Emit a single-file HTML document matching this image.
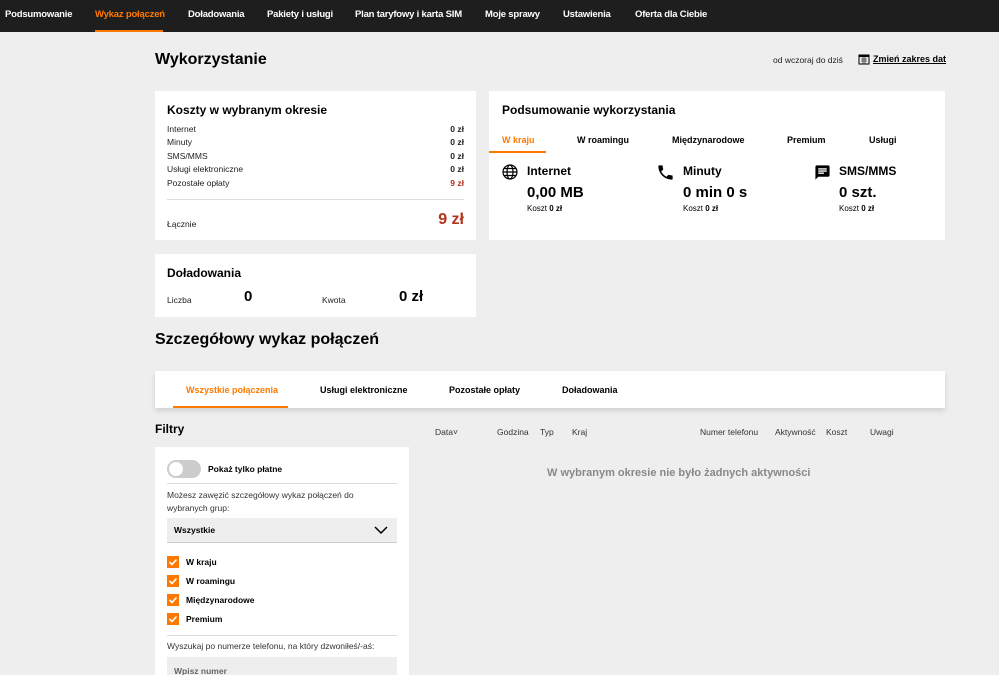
<!DOCTYPE html><html><head><meta charset="utf-8"><style>
*{box-sizing:border-box;margin:0;padding:0}
html,body{width:999px;height:675px;overflow:hidden}
body{background:#eeeeee;font-family:"Liberation Sans",Arial,sans-serif;color:#000;position:relative}
.nav{position:absolute;left:0;top:0;width:999px;height:32px;background:#1e1e1e}
.nav span{position:absolute;top:9px;font-size:9.5px;font-weight:bold;color:#fff;letter-spacing:-0.2px}
.abs{position:absolute;white-space:nowrap}
.card{position:absolute;background:#fff;overflow:hidden}
.sm{font-size:8.5px;color:#222}
.b{font-weight:bold}
</style></head><body>
<div class="nav">
<span style="left:5px">Podsumowanie</span>
<span style="left:95px;color:#ff7900">Wykaz połączeń</span>
<span style="left:188px">Doładowania</span>
<span style="left:267px">Pakiety i usługi</span>
<span style="left:355px">Plan taryfowy i karta SIM</span>
<span style="left:485px">Moje sprawy</span>
<span style="left:563px">Ustawienia</span>
<span style="left:635px">Oferta dla Ciebie</span>
<div class="abs" style="left:95px;top:30px;width:68px;height:2px;background:#ff7900"></div>
</div>
<div class="abs b" style="left:155px;top:51px;font-size:16px">Wykorzystanie</div>
<div class="abs sm" style="left:773px;top:55px">od wczoraj do dziś</div>
<svg class="abs" style="left:858px;top:53px" width="12" height="12" viewBox="0 0 12 12"><rect x="1" y="2" width="10" height="9" fill="none" stroke="#000"/><rect x="1" y="2" width="10" height="2" fill="#000"/><path d="M3 6h6M3 8h6M5 4v7M7 4v7" stroke="#000" stroke-width=".6"/></svg>
<div class="abs b" style="left:873px;top:54px;font-size:9px;text-decoration:underline">Zmień zakres dat</div>

<div class="card" style="left:155px;top:91px;width:321px;height:149px">
<div class="abs b" style="left:12px;top:12px;font-size:12px">Koszty w wybranym okresie</div>
<div class="abs sm" style="left:12px;top:32px;line-height:13.4px">Internet<br>Minuty<br>SMS/MMS<br>Usługi elektroniczne<br>Pozostałe opłaty</div>
<div class="abs sm b" style="right:12px;top:32px;line-height:13.4px;text-align:right">0 zł<br>0 zł<br>0 zł<br>0 zł<br><span style="color:#b4321e">9 zł</span></div>
<div class="abs" style="left:12px;right:12px;top:108px;height:1px;background:#ddd"></div>
<div class="abs sm" style="left:12px;top:128px">Łącznie</div>
<div class="abs b" style="right:12px;top:120px;font-size:16px;color:#b4321e">9 zł</div>
</div>
<div class="card" style="left:155px;top:254px;width:321px;height:63px">
<div class="abs b" style="left:12px;top:12px;font-size:12px">Doładowania</div>
<div class="abs sm" style="left:12px;top:41px">Liczba</div>
<div class="abs b" style="left:89px;top:34px;font-size:15px">0</div>
<div class="abs sm" style="left:167px;top:41px">Kwota</div>
<div class="abs b" style="left:244px;top:34px;font-size:15px">0 zł</div>
</div>

<div class="card" style="left:489px;top:91px;width:456px;height:149px">
<div class="abs b" style="left:13px;top:12px;font-size:12px">Podsumowanie wykorzystania</div>
<div class="abs b" style="left:13px;top:44px;font-size:9px;color:#ff7900">W kraju</div>
<div class="abs b" style="left:88px;top:44px;font-size:9px">W roamingu</div>
<div class="abs b" style="left:183px;top:44px;font-size:9px">Międzynarodowe</div>
<div class="abs b" style="left:298px;top:44px;font-size:9px">Premium</div>
<div class="abs b" style="left:380px;top:44px;font-size:9px">Usługi</div>
<div class="abs" style="left:0;top:60px;width:57px;height:2px;background:#ff7900"></div>
<svg class="abs" style="left:13px;top:73px" width="16" height="16" viewBox="0 0 16 16" fill="none" stroke="#000" stroke-width="1.2"><circle cx="8" cy="8" r="7"/><ellipse cx="8" cy="8" rx="3" ry="7"/><path d="M1 8h14M2.5 4.5h11M2.5 11.5h11"/></svg>
<div class="abs b" style="left:38px;top:73px;font-size:12px">Internet</div>
<div class="abs b" style="left:38px;top:93px;font-size:15px">0,00 MB</div>
<div class="abs" style="left:38px;top:113px;font-size:8px">Koszt <b>0 zł</b></div>
<svg class="abs" style="left:167px;top:72px" width="19" height="19" viewBox="0 0 24 24"><path d="M6.6 10.8c1.4 2.8 3.8 5.1 6.6 6.6l2.2-2.2c.3-.3.7-.4 1-.2 1.1.4 2.3.6 3.6.6.6 0 1 .4 1 1V20c0 .6-.4 1-1 1C10.6 21 3 13.4 3 4c0-.6.4-1 1-1h3.5c.6 0 1 .4 1 1 0 1.3.2 2.5.6 3.6.1.3 0 .7-.2 1z" fill="#000"/></svg>
<div class="abs b" style="left:194px;top:73px;font-size:12px">Minuty</div>
<div class="abs b" style="left:194px;top:93px;font-size:15px">0 min 0 s</div>
<div class="abs" style="left:194px;top:113px;font-size:8px">Koszt <b>0 zł</b></div>
<svg class="abs" style="left:325px;top:73px" width="17" height="17" viewBox="0 0 24 24"><path d="M20 2H4c-1.1 0-2 .9-2 2v18l4-4h14c1.1 0 2-.9 2-2V4c0-1.1-.9-2-2-2zM6 9h12v2H6zm8 5H6v-2h8zm4-6H6V6h12z" fill="#000"/></svg>
<div class="abs b" style="left:350px;top:73px;font-size:12px">SMS/MMS</div>
<div class="abs b" style="left:350px;top:93px;font-size:15px">0 szt.</div>
<div class="abs" style="left:350px;top:113px;font-size:8px">Koszt <b>0 zł</b></div>
</div>

<div class="abs b" style="left:155px;top:331px;font-size:16px">Szczegółowy wykaz połączeń</div>
<div class="card" style="left:155px;top:371px;width:790px;height:37px;box-shadow:0 3px 5px rgba(0,0,0,.12);overflow:visible">
<div class="abs b" style="left:31px;top:14px;font-size:9px;color:#ff7900">Wszystkie połączenia</div>
<div class="abs b" style="left:165px;top:14px;font-size:9px">Usługi elektroniczne</div>
<div class="abs b" style="left:294px;top:14px;font-size:9px">Pozostałe opłaty</div>
<div class="abs b" style="left:407px;top:14px;font-size:9px">Doładowania</div>
<div class="abs" style="left:18px;top:35px;width:115px;height:2px;background:#ff7900"></div>
</div>

<div class="abs b" style="left:155px;top:422px;font-size:12px">Filtry</div>
<div class="abs" style="top:427px;left:0;font-size:8.5px;color:#333">
<span class="abs" style="left:435px">Data˅</span><span class="abs" style="left:497px">Godzina</span><span class="abs" style="left:540px">Typ</span><span class="abs" style="left:572px">Kraj</span><span class="abs" style="left:700px">Numer telefonu</span><span class="abs" style="left:775px">Aktywność</span><span class="abs" style="left:826px">Koszt</span><span class="abs" style="left:870px">Uwagi</span></div>
<div class="abs b" style="left:547px;top:467px;font-size:11px;color:#888">W wybranym okresie nie było żadnych aktywności</div>

<div class="card" style="left:155px;top:447px;width:254px;height:228px">
<div class="abs" style="left:12px;top:13px;width:34px;height:18px;border-radius:9px;background:#ccc"><div class="abs" style="left:2px;top:2px;width:14px;height:14px;border-radius:7px;background:#fff"></div></div>
<div class="abs b" style="left:53px;top:17px;font-size:8.5px">Pokaż tylko płatne</div>
<div class="abs" style="left:12px;right:12px;top:36px;height:1px;background:#ddd"></div>
<div class="abs" style="left:12px;top:42px;font-size:8.5px;color:#333;line-height:13px">Możesz zawęzić szczegółowy wykaz połączeń do<br>wybranych grup:</div>
<div class="abs" style="left:12px;right:12px;top:71px;height:25px;background:#eee;border-bottom:1px solid #ccc"></div>
<div class="abs b" style="left:19px;top:78px;font-size:8.5px">Wszystkie</div>
<svg class="abs" style="left:219px;top:78px" width="14" height="10" viewBox="0 0 14 10"><path d="M1 2l6 6 6-6" fill="none" stroke="#000" stroke-width="1.5"/></svg>
<div class="abs b" style="left:31px;top:106px;font-size:8.5px;line-height:19px">W kraju<br>W roamingu<br>Międzynarodowe<br>Premium</div>
<div class="abs" style="left:12px;top:109px">
<svg width="12" height="70" viewBox="0 0 12 70"><g fill="#ff7900"><rect y="0" width="12" height="12"/><rect y="19" width="12" height="12"/><rect y="38" width="12" height="12"/><rect y="57" width="12" height="12"/></g><g fill="none" stroke="#fff" stroke-width="1.6"><path d="M2.5 6l2.5 2.5 4.5-5M2.5 25l2.5 2.5 4.5-5M2.5 44l2.5 2.5 4.5-5M2.5 63l2.5 2.5 4.5-5"/></g></svg></div>
<div class="abs" style="left:12px;right:12px;top:188px;height:1px;background:#ddd"></div>
<div class="abs" style="left:12px;top:194px;font-size:8.5px;color:#333">Wyszukaj po numerze telefonu, na który dzwoniłeś/-aś:</div>
<div class="abs" style="left:12px;right:12px;top:210px;height:30px;background:#eee"></div>
<div class="abs b" style="left:19px;top:219px;font-size:8.5px;color:#666">Wpisz numer</div>
</div>
</body></html>
